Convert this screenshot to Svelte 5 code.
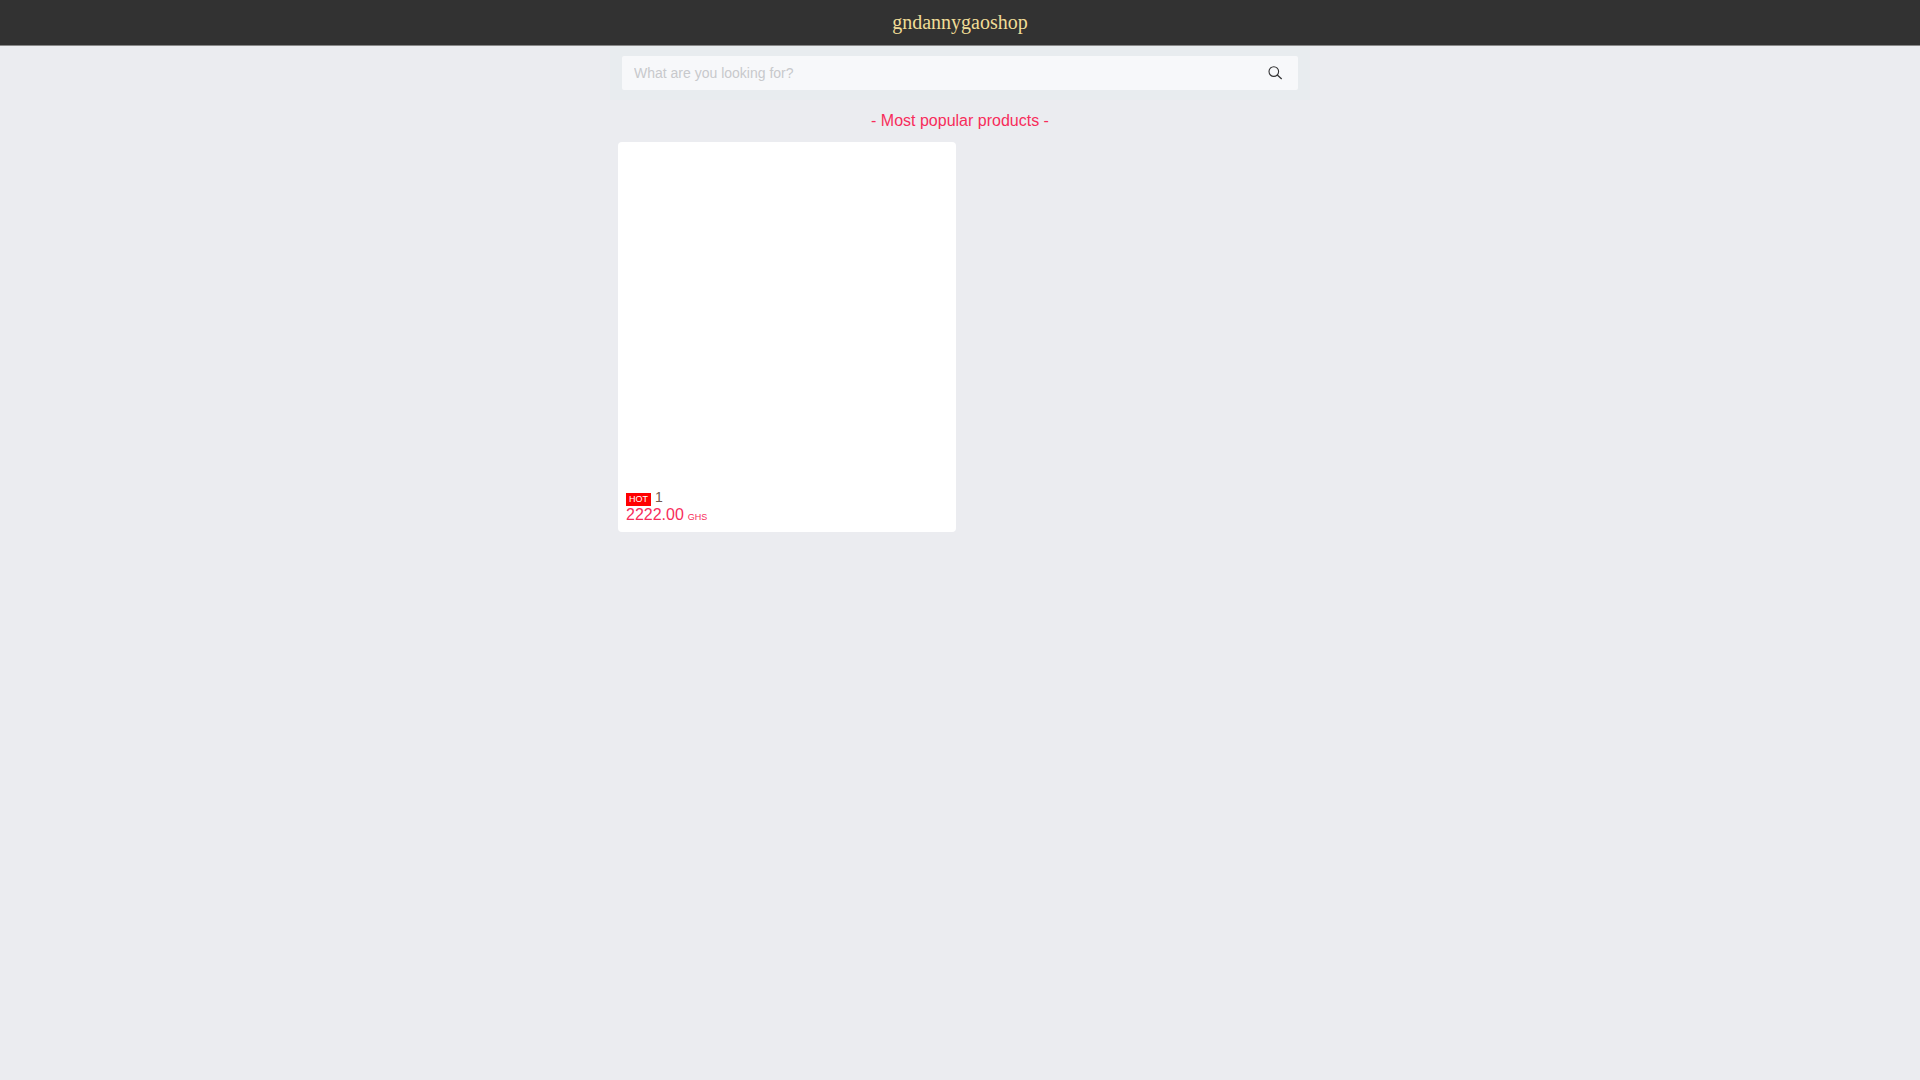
<script lang="ts">
	type Product = {
		name: string;
		price: string;
		currency: string;
		hot: boolean;
	};

	const shopName = 'gndannygaoshop';

	const products: Product[] = [{ name: '1', price: '2222.00', currency: 'GHS', hot: true }];

	let keyword = $state('');

	function search(event: SubmitEvent) {
		event.preventDefault();
		keyword = keyword.trim();
	}
</script>

<header class="header">
	<h1 class="shop-name">{shopName}</h1>
</header>

<main class="page">
	<form class="search" role="search" onsubmit={search}>
		<div class="search-box">
			<input
				class="search-input"
				type="text"
				aria-label="Search products"
				placeholder="What are you looking for?"
				bind:value={keyword}
			/>
			<button class="search-button" type="submit" aria-label="Search">
				<svg class="search-icon" viewBox="0 0 16 16" fill="none" stroke="currentColor">
					<circle cx="6.8" cy="6.6" r="4.8" stroke-width="1.1" />
					<path d="M10.3 10l4.4 4" stroke-width="1.2" />
				</svg>
			</button>
		</div>
	</form>

	<h2 class="section-title">- Most popular products -</h2>

	<div class="products">
		{#each products as product}
			<a class="card" href="#product">
				<div class="card-image"></div>
				<div class="card-body">
					<div class="card-name">
						{#if product.hot}
							<span class="hot">HOT</span>
						{/if}
						<span>{product.name}</span>
					</div>
					<div class="card-price">
						<span>{product.price}</span>
						<span class="currency">{product.currency}</span>
					</div>
				</div>
			</a>
		{/each}
	</div>
</main>

<style>
	:global(body) {
		margin: 0;
		background: #ebecf0;
		font-family: 'Liberation Sans', Arial, sans-serif;
	}

	.header {
		display: flex;
		justify-content: center;
		height: 45px;
		background: #323232;
		border-bottom: 1px solid #888;
	}

	.shop-name {
		margin: 0;
		color: #f0dc96;
		font-family: 'Liberation Serif', 'Times New Roman', serif;
		font-size: 20px;
		font-weight: 400;
		line-height: 44px;
	}

	.page {
		max-width: 700px;
		margin: 0 auto;
	}

	.search {
		padding: 10px 12px;
		background: #e8ecef;
	}

	.search-box {
		display: flex;
		align-items: center;
		height: 34px;
		padding: 0 12px;
		background: #f7f8fa;
		border-radius: 2px;
	}

	.search-input {
		flex: 1;
		min-width: 0;
		padding: 0;
		border: 0;
		outline: none;
		background: transparent;
		color: #323233;
		font-family: inherit;
		font-size: 14px;
		line-height: 24px;
	}

	.search-input::placeholder {
		color: #c8c9cc;
		opacity: 1;
	}

	.search-button {
		display: flex;
		padding: 0 3px;
		border: 0;
		background: transparent;
		color: #323233;
		cursor: pointer;
	}

	.search-icon {
		width: 16px;
		height: 16px;
	}

	.section-title {
		margin: 10px 0;
		color: #f72c5b;
		font-size: 16px;
		font-weight: 400;
		line-height: 22px;
		text-align: center;
	}

	.products {
		display: grid;
		grid-template-columns: repeat(2, 1fr);
		gap: 8px;
		padding: 0 8px;
	}

	.card {
		display: block;
		overflow: hidden;
		background: #fff;
		border-radius: 4px;
		color: inherit;
		text-decoration: none;
	}

	.card-image {
		aspect-ratio: 1;
	}

	.card-body {
		padding: 8px;
	}

	.card-name,
	.card-price {
		display: flex;
		align-items: baseline;
		gap: 4px;
		line-height: 18px;
	}

	.card-name {
		color: #725a50;
		font-size: 14px;
	}

	.hot {
		padding: 0 3px;
		background: #f00;
		color: #fff;
		font-size: 9px;
		line-height: 13px;
	}

	.card-price {
		color: #f72c5b;
		font-size: 16px;
	}

	.currency {
		font-size: 9px;
		line-height: 12px;
	}
</style>
